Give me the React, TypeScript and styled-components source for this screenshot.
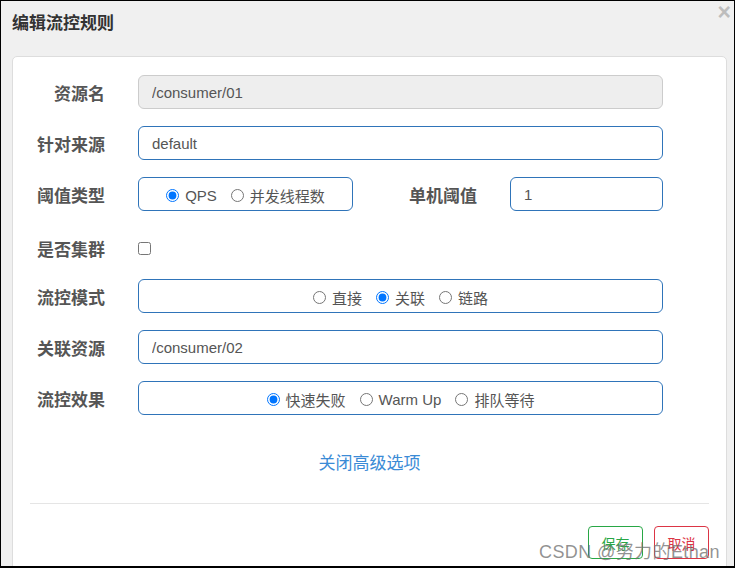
import React from 'react';
import styled, { createGlobalStyle } from 'styled-components';

const GlobalStyle = createGlobalStyle`
  body {
    margin: 0;
    font-family: "Liberation Sans", "Noto Sans CJK SC", sans-serif;
  }
`;

const Frame = styled.div`
  position: relative;
  width: 735px;
  height: 568px;
  box-sizing: border-box;
  border: 1px solid #000;
  border-bottom-width: 2px;
  background: #f0f0f0;
  overflow: hidden;
`;

const Header = styled.div`
  height: 55px;
  box-sizing: border-box;
  padding: 9px 0 0 11px;
`;

const Title = styled.h4`
  margin: 0;
  font-family: "Noto Sans CJK SC", sans-serif;
  font-size: 17px;
  line-height: 24px;
  font-weight: 700;
  color: #333;
`;

const Close = styled.span`
  position: absolute;
  top: 0;
  right: 3px;
  font-family: "Liberation Sans", sans-serif;
  font-size: 23px;
  line-height: 22px;
  font-weight: 700;
  color: #bdbdbd;
  cursor: pointer;
`;

const Panel = styled.div`
  width: 715px;
  height: 520px;
  box-sizing: border-box;
  margin-left: 11px;
  background: #fff;
  border: 1px solid #ddd;
  border-radius: 5px;
  padding-top: 18px;
`;

const Form = styled.div`
  display: flex;
  flex-direction: column;
  gap: 17px;
`;

const Row = styled.div<{ $pad?: number }>`
  display: flex;
  align-items: center;
  height: 34px;
  box-sizing: border-box;
  padding-top: ${(p) => p.$pad ?? 0}px;
`;

const Label = styled.label<{ $w?: number }>`
  width: ${(p) => p.$w ?? 92}px;
  flex-shrink: 0;
  margin-right: 33px;
  text-align: right;
  font-family: "Noto Sans CJK SC", sans-serif;
  font-size: 17px;
  font-weight: 700;
  color: #555;
`;

const Input = styled.input<{ $w?: number }>`
  width: ${(p) => p.$w ?? 525}px;
  height: 34px;
  box-sizing: border-box;
  padding: 0 13px;
  border: 1px solid #2f74b9;
  border-radius: 6px;
  background: #fff;
  font-family: "Liberation Sans", "Noto Sans CJK SC", sans-serif;
  font-size: 15px;
  color: #555;
  outline: none;

  &:disabled {
    background: #eee;
    border-color: #ccc;
  }
`;

const RadioBox = styled.div<{ $w?: number }>`
  width: ${(p) => p.$w ?? 525}px;
  height: 34px;
  box-sizing: border-box;
  display: flex;
  align-items: center;
  justify-content: center;
  gap: 14px;
  border: 1px solid #2f74b9;
  border-radius: 6px;
`;

const Option = styled.label`
  display: flex;
  align-items: center;
  gap: 6px;
  font-family: "Liberation Sans", "Noto Sans CJK SC", sans-serif;
  font-size: 15px;
  color: #555;
  padding-top: 2px;

  input {
    margin: 0;
    width: 13px;
    height: 13px;
  }
`;

const Check = styled.input`
  margin: 0;
  width: 13px;
  height: 13px;
`;

const Toggle = styled.div`
  margin-top: 36px;
  text-align: center;
  font-family: "Noto Sans CJK SC", sans-serif;
  font-size: 17px;
  line-height: 22px;
  color: #3b8bd6;
  cursor: pointer;
`;

const Divider = styled.hr`
  margin: 30px 17px 0;
  border: 0;
  border-top: 1px solid #e5e5e5;
`;

const Footer = styled.div`
  display: flex;
  justify-content: flex-end;
  gap: 11px;
  padding: 22px 17px 0 0;
`;

const Button = styled.button<{ $color: string }>`
  width: 55px;
  height: 33px;
  border: 1px solid ${(p) => p.$color};
  border-radius: 4px;
  background: #fff;
  color: ${(p) => p.$color};
  font-family: "Noto Sans CJK SC", sans-serif;
  font-size: 14px;
  padding: 0;
`;

const Watermark = styled.div`
  position: absolute;
  left: 538px;
  top: 536px;
  font-family: "Liberation Sans", "Noto Sans CJK SC", sans-serif;
  font-size: 18px;
  letter-spacing: 0.4px;
  color: rgba(110, 110, 110, 0.75);
  pointer-events: none;
`;

type Opt = { text: string; checked?: boolean };

const Radios: React.FC<{ name: string; options: Opt[]; width?: number }> = ({ name, options, width }) => (
  <RadioBox $w={width}>
    {options.map((o) => (
      <Option key={o.text}>
        <input type="radio" name={name} defaultChecked={o.checked} />
        {o.text}
      </Option>
    ))}
  </RadioBox>
);

export default function App() {
  return (
    <>
      <GlobalStyle />
      <Frame>
        <Header>
          <Title>编辑流控规则</Title>
        </Header>
        <Close>×</Close>
        <Panel>
          <Form>
            <Row>
              <Label>资源名</Label>
              <Input disabled defaultValue="/consumer/01" />
            </Row>
            <Row>
              <Label>针对来源</Label>
              <Input defaultValue="default" />
            </Row>
            <Row>
              <Label>阈值类型</Label>
              <Radios
                name="grade"
                width={215}
                options={[{ text: 'QPS', checked: true }, { text: '并发线程数' }]}
              />
              <Label $w={124}>单机阈值</Label>
              <Input $w={153} defaultValue="1" />
            </Row>
            <Row $pad={6}>
              <Label>是否集群</Label>
              <Check type="checkbox" />
            </Row>
            <Row>
              <Label>流控模式</Label>
              <Radios
                name="strategy"
                options={[{ text: '直接' }, { text: '关联', checked: true }, { text: '链路' }]}
              />
            </Row>
            <Row>
              <Label>关联资源</Label>
              <Input defaultValue="/consumer/02" />
            </Row>
            <Row>
              <Label>流控效果</Label>
              <Radios
                name="behavior"
                options={[{ text: '快速失败', checked: true }, { text: 'Warm Up' }, { text: '排队等待' }]}
              />
            </Row>
          </Form>
          <Toggle>关闭高级选项</Toggle>
          <Divider />
          <Footer>
            <Button $color="#28a745">保存</Button>
            <Button $color="#dc3545">取消</Button>
          </Footer>
        </Panel>
        <Watermark>CSDN @努力的Ethan</Watermark>
      </Frame>
    </>
  );
}
